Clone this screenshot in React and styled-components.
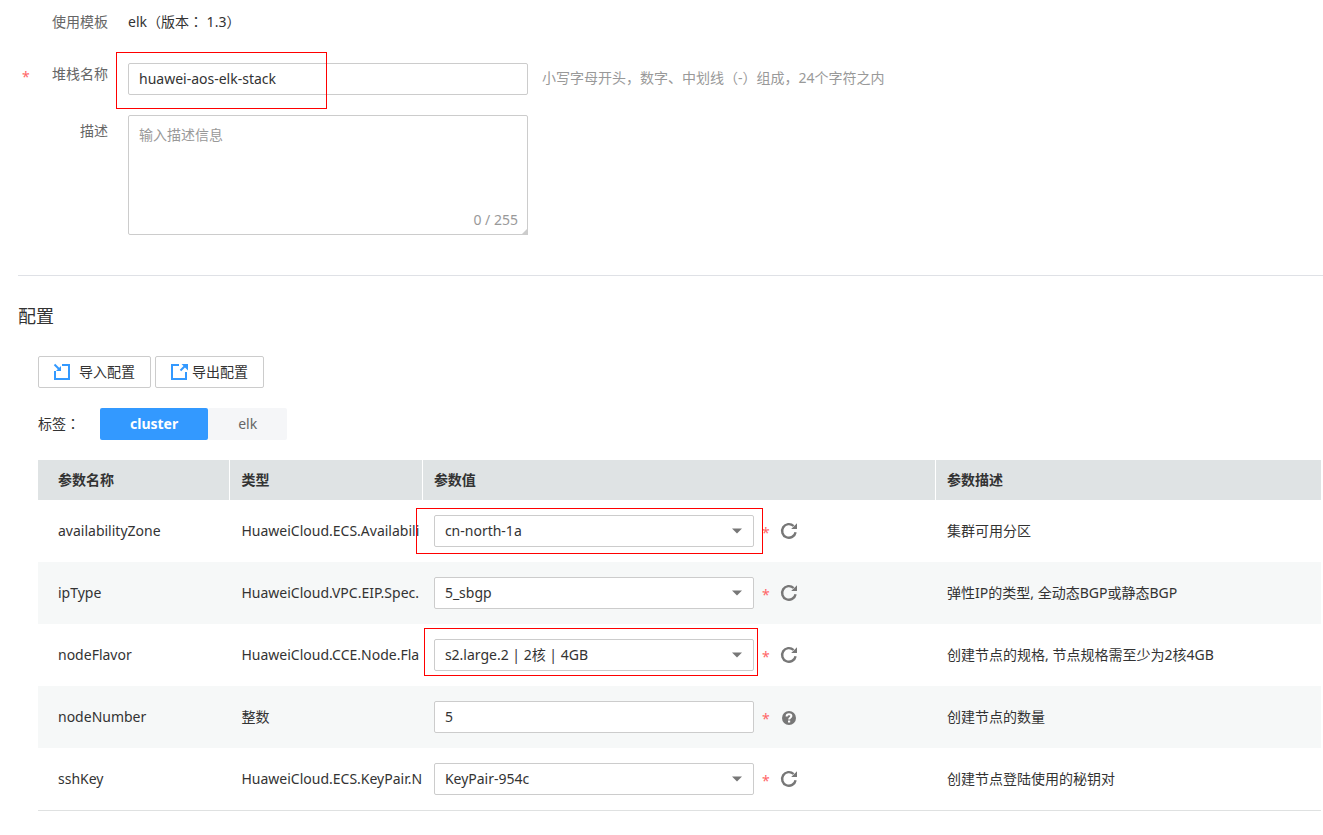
import { useState } from "react";
import styled, { createGlobalStyle } from "styled-components";

const GlobalStyle = createGlobalStyle`
    * {
        box-sizing: border-box;
    }

    body {
        margin: 0;
        background: #fff;
        color: #333;
        font-family: "Noto Sans", "Noto Sans CJK SC", sans-serif;
        font-size: 14px;
        line-height: 20px;
    }

    button,
    input,
    select,
    textarea {
        font: inherit;
        color: inherit;
    }
`;

const Page = styled.main`
    padding: 12px 0 24px 18px;
`;

const Form = styled.form`
    display: flex;
    flex-direction: column;
    gap: 20px;
    padding-bottom: 40px;
    border-bottom: 1px solid #dfe1e6;
`;

const FormRow = styled.div`
    display: flex;
    align-items: flex-start;
    gap: 20px;
`;

const FormLabel = styled.label`
    display: flex;
    justify-content: flex-end;
    width: 90px;
    padding-top: ${(props) => props.$top || "0"};
    color: #666;
`;

const Star = styled.span`
    width: 8px;
    padding-top: 3px;
    margin-right: ${(props) => (props.$push ? "auto" : "0")};
    margin-left: ${(props) => (props.$push ? "4px" : "0")};
    color: #f66;
`;

const TemplateName = styled.div`
    margin-bottom: 11px;
`;

// full-width colon set in the middle of its box
const Colon = styled.span`
    font-family: "Noto Sans CJK TC", sans-serif;
    line-height: 1;
`;

const FieldBox = styled.div`
    position: relative;
    width: ${(props) => props.$width};
`;

const TextInput = styled.input`
    display: block;
    width: 100%;
    height: 32px;
    padding: 0 10px 2px;
    border: 1px solid #ccc;
    border-radius: 2px;
    background: #fff;
`;

const TextArea = styled.textarea`
    display: block;
    width: 100%;
    height: 120px;
    padding: 9px 10px;
    border: 1px solid #ccc;
    border-radius: 2px;
    resize: none;

    &::placeholder {
        color: #999;
    }
`;

const Counter = styled.span`
    position: absolute;
    right: 10px;
    bottom: 5px;
    color: #999;
`;

const Corner = styled.svg`
    position: absolute;
    right: 0;
    bottom: 0;
`;

const Hint = styled.span`
    padding-top: 5px;
    margin-left: -6px;
    color: #999;
`;

const Highlight = styled.div`
    position: absolute;
    z-index: 1;
    inset: ${(props) => props.$inset};
    border: 1px solid #f00;
    pointer-events: none;
`;

const Title = styled.h2`
    margin: 28px 0;
    font-size: 18px;
    font-weight: 400;
    line-height: 24px;
`;

const Config = styled.div`
    padding: 0 2px 0 20px;
`;

const Toolbar = styled.div`
    display: flex;
    gap: 4px;
`;

const ToolButton = styled.button`
    display: flex;
    align-items: center;
    gap: ${(props) => props.$gap};
    height: 32px;
    padding: 0 15px 0 14px;
    border: 1px solid #ccc;
    border-radius: 2px;
    background: #fff;
    cursor: pointer;
`;

const Tags = styled.div`
    display: flex;
    align-items: center;
    margin: 20px 0;
`;

const TagsLabel = styled.span`
    width: 62px;
`;

const Tag = styled.button`
    height: 32px;
    padding: 0 30px;
    border: 0;
    border-radius: 2px;
    background: ${(props) => (props.$active ? "#39f" : "#f5f6f8")};
    color: ${(props) => (props.$active ? "#fff" : "#666")};
    font-weight: ${(props) => (props.$active ? "700" : "400")};
    cursor: pointer;
`;

const Table = styled.table`
    width: 100%;
    table-layout: fixed;
    border-collapse: separate;
    border-spacing: 0;
    border-bottom: 1px solid #dfe1e1;
`;

const HeadCell = styled.th`
    width: ${(props) => props.$width};
    height: 40px;
    padding: 0 0 0 11px;
    border-right: 1px solid #fff;
    background: #dfe3e4;
    text-align: left;

    &:first-child {
        padding-left: 20px;
    }

    &:last-child {
        border-right: 0;
    }
`;

const Row = styled.tr`
    &:nth-child(even) {
        background: #f6f8f8;
    }
`;

const Cell = styled.td`
    height: 62px;
    padding: 0 0 0 11px;
    white-space: nowrap;

    &:first-child {
        padding-left: 20px;
    }
`;

const ValueBox = styled.div`
    display: flex;
    align-items: center;
    gap: 8px;
`;

const Select = styled.select`
    display: block;
    width: 100%;
    height: 32px;
    padding: 0 30px 0 10px;
    border: 1px solid #ccc;
    border-radius: 2px;
    background: #fff;
    appearance: none;
`;

const Arrow = styled.svg`
    position: absolute;
    top: 13px;
    right: 12px;
    pointer-events: none;
`;

const IconButton = styled.button`
    display: flex;
    padding: 0;
    border: 0;
    margin-left: 2px;
    background: none;
    cursor: pointer;
`;

const params = [
    { name: "availabilityZone", type: "HuaweiCloud.ECS.Availabili", value: "cn-north-1a", desc: "集群可用分区", highlight: "-7px -9px -7px -18px" },
    { name: "ipType", type: "HuaweiCloud.VPC.EIP.Spec.", value: "5_sbgp", desc: "弹性IP的类型, 全动态BGP或静态BGP" },
    { name: "nodeFlavor", type: "HuaweiCloud.CCE.Node.Fla", value: "s2.large.2 | 2核 | 4GB", desc: "创建节点的规格, 节点规格需至少为2核4GB", highlight: "-11px -4px -5px -10px" },
    { name: "nodeNumber", type: "整数", value: "5", desc: "创建节点的数量", number: true },
    { name: "sshKey", type: "HuaweiCloud.ECS.KeyPair.N", value: "KeyPair-954c", desc: "创建节点登陆使用的秘钥对" },
];

function ImportIcon() {
    return (
        <svg width="18" height="18" viewBox="0 0 18 18" fill="none" stroke="#39f" strokeWidth="2">
            <path d="M9 2h7v14H2V8" />
            <path d="M1.5 1.5l5 5" />
            <path d="M8 3v5H3z" fill="#39f" stroke="none" />
        </svg>
    );
}

function ExportIcon() {
    return (
        <svg width="18" height="18" viewBox="0 0 18 18" fill="none" stroke="#39f" strokeWidth="2">
            <path d="M9 2H2v14h14V9" />
            <path d="M10.5 7.5l5-5" />
            <path d="M11.5 1H18v6.5z" fill="#39f" stroke="none" />
        </svg>
    );
}

function RefreshIcon() {
    return (
        <svg width="18" height="18" viewBox="0 0 18 18">
            <path d="M15.6 10.2A6.8 6.8 0 1 1 13.6 4" fill="none" stroke="#777" strokeWidth="2.4" />
            <path d="M17 1.2V7h-5.8z" fill="#777" />
        </svg>
    );
}

function HelpIcon() {
    return (
        <svg width="18" height="18" viewBox="0 0 18 18">
            <circle cx="9" cy="10" r="7" fill="#777" />
            <path d="M6.6 8.4c0-3 4.8-2.8 4.8-.3 0 1.7-2.3 1.6-2.3 3.3" fill="none" stroke="#fff" strokeWidth="2" />
            <path d="M8 12.5h2.2v2H8z" fill="#fff" />
        </svg>
    );
}

function ParamRow({ param }) {
    return (
        <Row>
            <Cell>{param.name}</Cell>
            <Cell>{param.type}</Cell>
            <Cell>
                <ValueBox>
                    <FieldBox $width="320px">
                        {param.number ? (
                            <TextInput aria-label={param.name} defaultValue={param.value} />
                        ) : (
                            <>
                                <Select aria-label={param.name}>
                                    <option>{param.value}</option>
                                </Select>
                                <Arrow width="10" height="6" viewBox="0 0 10 6">
                                    <path d="M0 0.5h10L5 5.5z" fill="#777" />
                                </Arrow>
                            </>
                        )}
                        {param.highlight && <Highlight $inset={param.highlight} />}
                    </FieldBox>
                    <Star>*</Star>
                    <IconButton type="button" aria-label={param.number ? "帮助" : "刷新"}>
                        {param.number ? <HelpIcon /> : <RefreshIcon />}
                    </IconButton>
                </ValueBox>
            </Cell>
            <Cell>{param.desc}</Cell>
        </Row>
    );
}

function App() {
    const [name, setName] = useState("huawei-aos-elk-stack");
    const [description, setDescription] = useState("");
    const [tag, setTag] = useState("cluster");

    return (
        <>
            <GlobalStyle />
            <Page>
                <Form>
                    <FormRow>
                        <FormLabel as="span">使用模板</FormLabel>
                        <TemplateName>
                            elk（版本<Colon>：</Colon> 1.3）
                        </TemplateName>
                    </FormRow>
                    <FormRow>
                        <FormLabel htmlFor="stack-name" $top="1px">
                            <Star $push>*</Star>堆栈名称
                        </FormLabel>
                        <FieldBox $width="400px">
                            <TextInput id="stack-name" value={name} onChange={(e) => setName(e.target.value)} />
                            <Highlight $inset="-11px 201px -14px -12px" />
                        </FieldBox>
                        <Hint>小写字母开头，数字、中划线（-）组成，24个字符之内</Hint>
                    </FormRow>
                    <FormRow>
                        <FormLabel htmlFor="description" $top="6px">
                            描述
                        </FormLabel>
                        <FieldBox $width="400px">
                            <TextArea id="description" placeholder="输入描述信息" maxLength={255} value={description} onChange={(e) => setDescription(e.target.value)} />
                            <Counter>{description.length} / 255</Counter>
                            <Corner width="7" height="7" viewBox="0 0 7 7">
                                <path d="M7 0v7H0z" fill="#ccc" />
                            </Corner>
                        </FieldBox>
                    </FormRow>
                </Form>
                <Title>配置</Title>
                <Config>
                    <Toolbar>
                        <ToolButton type="button" $gap="8px">
                            <ImportIcon />
                            导入配置
                        </ToolButton>
                        <ToolButton type="button" $gap="4px">
                            <ExportIcon />
                            导出配置
                        </ToolButton>
                    </Toolbar>
                    <Tags>
                        <TagsLabel>
                            标签<Colon>：</Colon>
                        </TagsLabel>
                        {["cluster", "elk"].map((item) => (
                            <Tag key={item} type="button" $active={tag === item} onClick={() => setTag(item)}>
                                {item}
                            </Tag>
                        ))}
                    </Tags>
                    <Table>
                        <thead>
                            <tr>
                                <HeadCell $width="15%">参数名称</HeadCell>
                                <HeadCell $width="15%">类型</HeadCell>
                                <HeadCell $width="40%">参数值</HeadCell>
                                <HeadCell $width="30%">参数描述</HeadCell>
                            </tr>
                        </thead>
                        <tbody>
                            {params.map((param) => (
                                <ParamRow key={param.name} param={param} />
                            ))}
                        </tbody>
                    </Table>
                </Config>
            </Page>
        </>
    );
}

export default App;
